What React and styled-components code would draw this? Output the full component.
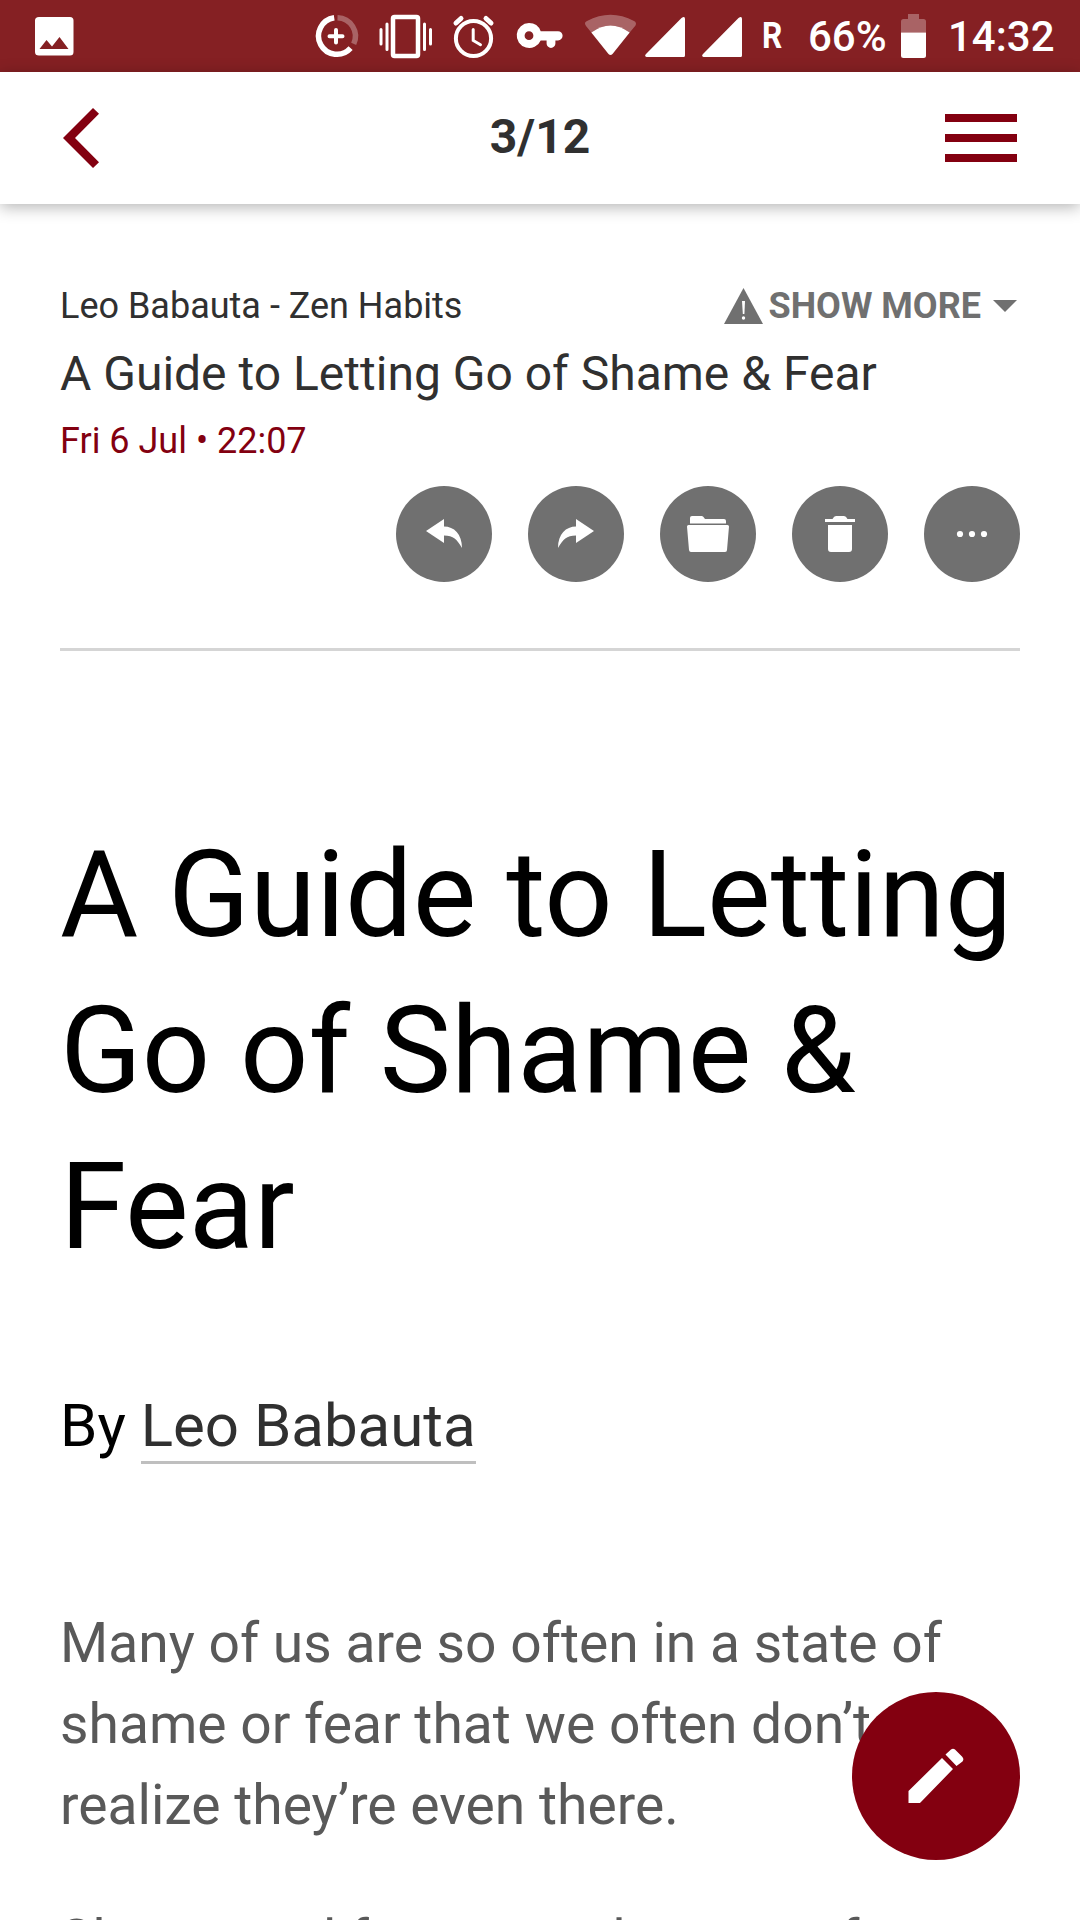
import React from "react";
import styled, { createGlobalStyle } from "styled-components";

const RED = "#830010";
const GREY = "#707070";

const Global = createGlobalStyle`
  *{box-sizing:border-box}
  html,body{margin:0;padding:0}
  body{background:#fff;font-family:Roboto,"Liberation Sans",sans-serif;}
  h1,p{margin:0;font-weight:400}
  button{border:0;padding:0;background:none;font:inherit;color:inherit}
`;

const Screen = styled.div`
  position: relative;
  width: 1080px;
  height: 1920px;
  overflow: hidden;
  background: #fff;
  display: flex;
  flex-direction: column;
`;

const StatusBar = styled.header`
  height: 72px;
  flex: none;
  background: #852023;
  color: #fff;
  display: flex;
  align-items: center;
  padding: 0 24px 0 34px;
`;
const Icon = styled.svg`
  display: block;
  flex: none;
  width: ${(p) => p.$w}px;
  height: ${(p) => p.$h}px;
  margin-left: ${(p) => p.$gap || 0}px;
  overflow: visible;
`;
const StatusIcons = styled.div`
  display: flex;
  align-items: center;
  margin-left: auto;
  height: 72px;
`;
const StatusText = styled.span`
  font-size: ${(p) => p.$size}px;
  font-weight: ${(p) => p.$weight};
  line-height: 72px;
  width: ${(p) => p.$w}px;
  margin-left: ${(p) => p.$gap}px;
  padding-top: ${(p) => p.$drop || 0}px;
  white-space: nowrap;
`;
const Roaming = styled(StatusText)`
  transform: scaleX(0.88);
  transform-origin: left center;
`;

const NavBar = styled.nav`
  height: 132px;
  flex: none;
  display: grid;
  grid-template-columns: 1fr auto 1fr;
  align-items: center;
  padding: 0 63px;
  background: #fff;
  box-shadow: 0 3px 15px rgba(0, 0, 0, 0.3);
  z-index: 1;
`;
const Counter = styled.div`
  font-size: 48px;
  font-weight: 700;
  line-height: 57px;
  color: #303030;
  padding-bottom: 3px;
`;
const IconButton = styled.button`
  justify-self: ${(p) => p.$side};
`;
const Bars = styled.span`
  display: flex;
  flex-direction: column;
  gap: 12px;
`;
const Bar = styled.span`
  width: 72px;
  height: 8px;
  background: ${RED};
`;

const Message = styled.main`
  padding: 0 60px;
`;
const Meta = styled.section`
  height: 447px;
  padding-top: 81px;
  border-bottom: 3px solid #d5d5d5;
  color: #303030;
`;
const SenderRow = styled.div`
  display: flex;
  justify-content: space-between;
  align-items: center;
  height: 42px;
  font-size: 36px;
  line-height: 42px;
`;
const ShowMore = styled.button`
  display: flex;
  align-items: center;
  color: ${GREY};
  font-weight: 700;
  padding-right: 3px;
`;
const ShowMoreLabel = styled.span`
  margin-left: 5px;
`;
const Subject = styled.div`
  margin-top: 18px;
  font-size: 48px;
  line-height: 57px;
`;
const DateLine = styled.div`
  margin-top: 18px;
  font-size: 36px;
  line-height: 42px;
  color: ${RED};
`;
const Actions = styled.div`
  display: flex;
  justify-content: flex-end;
  gap: 36px;
  margin-top: 24px;
`;
const ActionButton = styled.button`
  width: 96px;
  height: 96px;
  border-radius: 50%;
  background: ${GREY};
`;

const Heading = styled.h1`
  margin-top: 166px;
  font-size: 120px;
  line-height: 156px;
  color: #000;
`;
const Byline = styled.p`
  margin-top: 98px;
  font-size: 60px;
  line-height: 85px;
  color: #000;
`;
const Author = styled.a`
  color: #303030;
  border-bottom: 3px solid #bfbfbf;
`;
const Paragraph = styled.p`
  margin-top: ${(p) => p.$gap}px;
  font-size: 55.2px;
  line-height: 81px;
  color: #595959;
  white-space: nowrap;
`;

const Compose = styled.button`
  position: absolute;
  right: 60px;
  bottom: 60px;
  width: 168px;
  height: 168px;
  border-radius: 50%;
  background: ${RED};
`;

const Glyph = ({ children, size = 96 }) => (
  <Icon $w={size} $h={size} viewBox={`0 0 ${size} ${size}`} fill="#fff">{children}</Icon>
);

export default function App() {
  return (
    <Screen>
      <Global />
      <StatusBar>
        <Icon $w={40} $h={72} viewBox="34 0 40 72">
          <path fill="#fff" fillRule="evenodd" d="M39 17h31q3.500 0 3.500 3.500v31.500q0 3.500-3.500 3.500h-31q-4 0-4-3.500v-31.500q0-3.500 4-3.500zM39.500 49H68.500L59.500 37L52 46.500L46.500 40z" />
        </Icon>
        <StatusIcons>
          <Icon $w={448} $h={72} viewBox="314 0 448 72" fill="none" stroke="#fff">
            <g strokeWidth="5.500">
              <path d="M334.200 17.700A18.400 18.400 0 1 0 350.600 48.200" />
              <path opacity=".3" d="M337.500 17.700A18.400 18.400 0 0 1 353.700 43.800" />
            </g>
            <path strokeWidth="4" strokeLinecap="round" d="M336 30V42.500M329.500 36.200H342.500" />
            <rect x="393" y="17" width="25" height="39" rx="1.500" strokeWidth="4.500" />
            <path strokeWidth="3" strokeLinecap="round" d="M381 29.500V44M387 24V49.500M424.500 24V49.500M430.500 29.500V44" />
            <circle cx="473.500" cy="38.500" r="17.600" strokeWidth="4" />
            <path strokeWidth="3" strokeLinecap="round" d="M473.200 29.500V40.500L480.500 44.800" />
            <path strokeWidth="5" strokeLinecap="round" d="M456 23L461 18.500M486 18.500L491 23" />
            <path stroke="none" fill="#fff" fillRule="evenodd" d="M529 23a12.500 12.500 0 0 1 11.700 8.200H558a4.600 4.600 0 0 1 0 9.200H555.400V43.500a4.400 4.400 0 0 1-8.800 0V40.400H540.700A12.500 12.500 0 1 1 529 23zM529 31.300a4.400 4.400 0 1 0 0 8.800 4.400 4.400 0 0 0 0-8.800z" />
            <path stroke="none" fill="#fff" opacity=".3" d="M585 24Q584.500 22 587 21Q610.500 8.500 634 21Q637 22.500 635.500 25.500L629.700 32.500Q610.500 18.500 591.300 32.500L586 26z" />
            <path stroke="none" fill="#fff" d="M591.300 32.500Q610.500 18.500 629.700 32.500L612.500 54Q610.500 56 608.500 54z" />
            <path stroke="none" fill="#fff" d="M646 54L681.500 18Q685 15.500 685 19V55.500Q685 57 683.500 57H646.500Q644 56 646 54zM703 54L738.500 18Q742 15.500 742 19V55.500Q742 57 740.500 57H703.500Q701 56 703 54z" />
          </Icon>
          <Roaming $size={36} $weight={700} $w={24} $gap={0}>R</Roaming>
          <StatusText $size={42} $weight={500} $w={79} $gap={22} $drop={2}>66%</StatusText>
          <Icon $w={25} $h={72} $gap={14} viewBox="901 0 25 72">
            <path fill="#fff" opacity=".3" d="M908 14h11v5h4.500q2.500 0 2.500 2.500v11h-25v-11q0-2.500 2.500-2.500h4.500z" />
            <path fill="#fff" d="M901 32.500h25v23q0 2.500-2.500 2.500h-20q-2.500 0-2.500-2.500z" />
          </Icon>
          <StatusText $size={42} $weight={500} $w={108} $gap={22} $drop={2}>14:32</StatusText>
        </StatusIcons>
      </StatusBar>

      <NavBar>
        <IconButton $side="start" aria-label="Back">
          <Icon $w={36} $h={60} viewBox="0 0 36 60"><path fill={RED} d="M30 0L36 5.700L12 30L36 54.300L30 60L0 30z" /></Icon>
        </IconButton>
        <Counter>3/12</Counter>
        <IconButton $side="end" aria-label="Menu">
          <Bars><Bar /><Bar /><Bar /></Bars>
        </IconButton>
      </NavBar>

      <Message>
        <Meta>
          <SenderRow>
            <span>Leo Babauta - Zen Habits</span>
            <ShowMore>
              <Icon $w={39} $h={36} viewBox="0 0 39 36">
                <path fill={GREY} d="M19.500 0L39 36H0z" />
                <path fill="#fff" d="M18 13h3l-.6 13h-1.600z" /><circle fill="#fff" cx="19.500" cy="30" r="1.700" />
              </Icon>
              <ShowMoreLabel>SHOW MORE</ShowMoreLabel>
              <Icon $w={24} $h={12} $gap={12} viewBox="0 0 24 12"><path fill={GREY} d="M0 0H24L12 12z" /></Icon>
            </ShowMore>
          </SenderRow>
          <Subject>A Guide to Letting Go of Shame &amp; Fear</Subject>
          <DateLine>Fri 6 Jul • 22:07</DateLine>
          <Actions>
            <ActionButton aria-label="Reply"><Glyph><path d="M30 45L48 33V40.500C58 40.500 66 48 66 62C61 53.500 57.500 49.500 48 49.500V57z" /></Glyph></ActionButton>
            <ActionButton aria-label="Forward"><Glyph><path d="M66 45L48 33V40.500C38 40.500 30 48 30 62C35 53.500 38.500 49.500 48 49.500V57z" /></Glyph></ActionButton>
            <ActionButton aria-label="Move"><Glyph><path d="M30 37.500V32Q30 30 32 30H42Q43 30 45 33H64Q66 33 66 35V37.500zM28.500 39H67.500Q69 39 69 40.500L67 64Q67 66 65 66H31Q29.300 66 29 64L27 40.500Q27 39 28.500 39z" /></Glyph></ActionButton>
            <ActionButton aria-label="Delete"><Glyph><path d="M33 33H40.500Q42 30 44 30H52Q54 30 55.500 33H63V36H33zM36 39H60V63Q60 66 57 66H39Q36 66 36 63z" /></Glyph></ActionButton>
            <ActionButton aria-label="More"><Glyph><circle cx="36" cy="48" r="3.100" /><circle cx="48" cy="48" r="3.100" /><circle cx="60" cy="48" r="3.100" /></Glyph></ActionButton>
          </Actions>
        </Meta>

        <Heading>A Guide to Letting Go of Shame &amp; Fear</Heading>
        <Byline>By <Author>Leo Babauta</Author></Byline>
        <Paragraph $gap={135}>
          Many of us are so often in a state of<br />shame or fear that we often don’t<br />realize they’re even there.
        </Paragraph>
        <Paragraph $gap={54}>Shame and fear can rob some of</Paragraph>
      </Message>

      <Compose aria-label="Compose">
        <Glyph size={168}><path d="M56.500 111V99L90 66L101 77L68 111zM93.500 62.500L99 57.500Q101 56 103 57.500L110 64.500Q112.500 67 110.500 69.500L104.500 74z" /></Glyph>
      </Compose>
    </Screen>
  );
}
